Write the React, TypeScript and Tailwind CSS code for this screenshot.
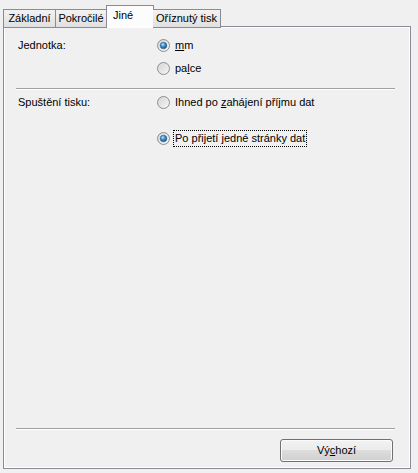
import React from 'react';

const font = { fontFamily: '"Liberation Sans", Arial, sans-serif' };

const Radio: React.FC<{ checked?: boolean }> = ({ checked }) => (
  <svg width="13" height="13" viewBox="0 0 13 13" className="shrink-0">
    <defs>
      <linearGradient id="rb" x1="0" y1="0" x2="1" y2="1">
        <stop offset="0" stopColor="#d4d4d4" />
        <stop offset="1" stopColor="#f6f6f6" />
      </linearGradient>
      <radialGradient id="rd" cx="0.4" cy="0.35" r="0.7">
        <stop offset="0" stopColor="#c8e6fb" />
        <stop offset="0.45" stopColor="#3a8fd0" />
        <stop offset="1" stopColor="#16497c" />
      </radialGradient>
    </defs>
    <circle cx="6.5" cy="6.5" r="6" fill="url(#rb)" stroke="#8f8f8f" strokeWidth="1" />
    {checked && <circle cx="6.5" cy="6.5" r="3.3" fill="url(#rd)" stroke="#2c628b" strokeWidth="0.6" />}
  </svg>
);

const Option: React.FC<{ checked?: boolean; focus?: boolean; children: React.ReactNode }> = ({
  checked,
  focus,
  children,
}) => (
  <div className="flex items-center h-[17px]">
    <Radio checked={checked} />
    <span
      className={`ml-[3px] leading-[15px] px-[1px] ${
        focus ? 'border border-dotted border-black' : 'border border-transparent'
      }`}
    >
      {children}
    </span>
  </div>
);

const tabs = [
  { name: 'Základní', w: 'w-[53px]' },
  { name: 'Pokročilé', w: 'w-[51px]' },
  { name: 'Jiné', w: 'w-[48px]', active: true },
  { name: 'Oříznutý tisk', w: 'w-[68px]' },
];

export default function App() {
  return (
    <div className="w-[418px] h-[473px] bg-[#f0f0f0] text-[11px] text-black overflow-hidden" style={font}>
      <div className="flex items-end h-[27px] pl-[3px] relative z-10">
        {tabs.map((t) =>
          t.active ? (
            <div
              key={t.name}
              className={`${t.w} h-[22px] -mx-[1px] bg-[#fcfcfc] border border-b-0 border-[#898c95] pl-[6px] pb-[2px] flex items-center`}
            >
              {t.name}
            </div>
          ) : (
            <div
              key={t.name}
              className={`${t.w} h-[19px] -mb-[1px] bg-gradient-to-b from-[#f2f2f2] to-[#e0e0e0] border border-[#898c95] border-l-0 first:border-l flex items-center justify-center whitespace-nowrap`}
            >
              {t.name}
            </div>
          )
        )}
      </div>
      <div className="ml-[3px] w-[408px] h-[443px] border border-[#898c95] bg-[#f0f0f0] shadow-[inset_1px_1px_0_#ffffff,inset_-1px_-1px_0_#ffffff] flex flex-col pl-[12px] pr-[15px] pt-[10px] pb-[6px] -mt-[1px]">
        <div className="grid grid-cols-[141px_1fr]">
          <div className="pl-[2px] h-[17px] leading-[17px]">Jednotka:</div>
          <div className="flex flex-col gap-[6px]">
            <Option checked>
              <span className="underline">m</span>m
            </Option>
            <Option>
              pa<span className="underline">l</span>ce
            </Option>
          </div>
        </div>
        <div className="mt-[11px] border-t border-[#a0a0a0] border-b border-b-white" />
        <div className="grid grid-cols-[141px_1fr] mt-[4px]">
          <div className="pl-[2px] h-[17px] leading-[17px]">Spuštění tisku:</div>
          <div className="flex flex-col gap-[19px]">
            <Option>
              Ihned po <span className="underline">z</span>ahájení příjmu dat
            </Option>
            <Option checked focus>
              Po přijetí <span className="underline">j</span>edné stránky dat
            </Option>
          </div>
        </div>
        <div className="flex-1" />
        <div className="border-t border-[#a0a0a0] border-b border-b-white" />
        <div className="flex justify-end mt-[9px] pr-[2px]">
          <button className="w-[113px] h-[23px] rounded-[3px] border border-[#707070] bg-[linear-gradient(#f2f2f2_0%,#ebebeb_50%,#dddddd_50%,#cfcfcf_100%)] shadow-[inset_0_0_0_1px_#fbfbfb] text-[11px]">
            Vý<span className="underline">c</span>hozí
          </button>
        </div>
      </div>
    </div>
  );
}
